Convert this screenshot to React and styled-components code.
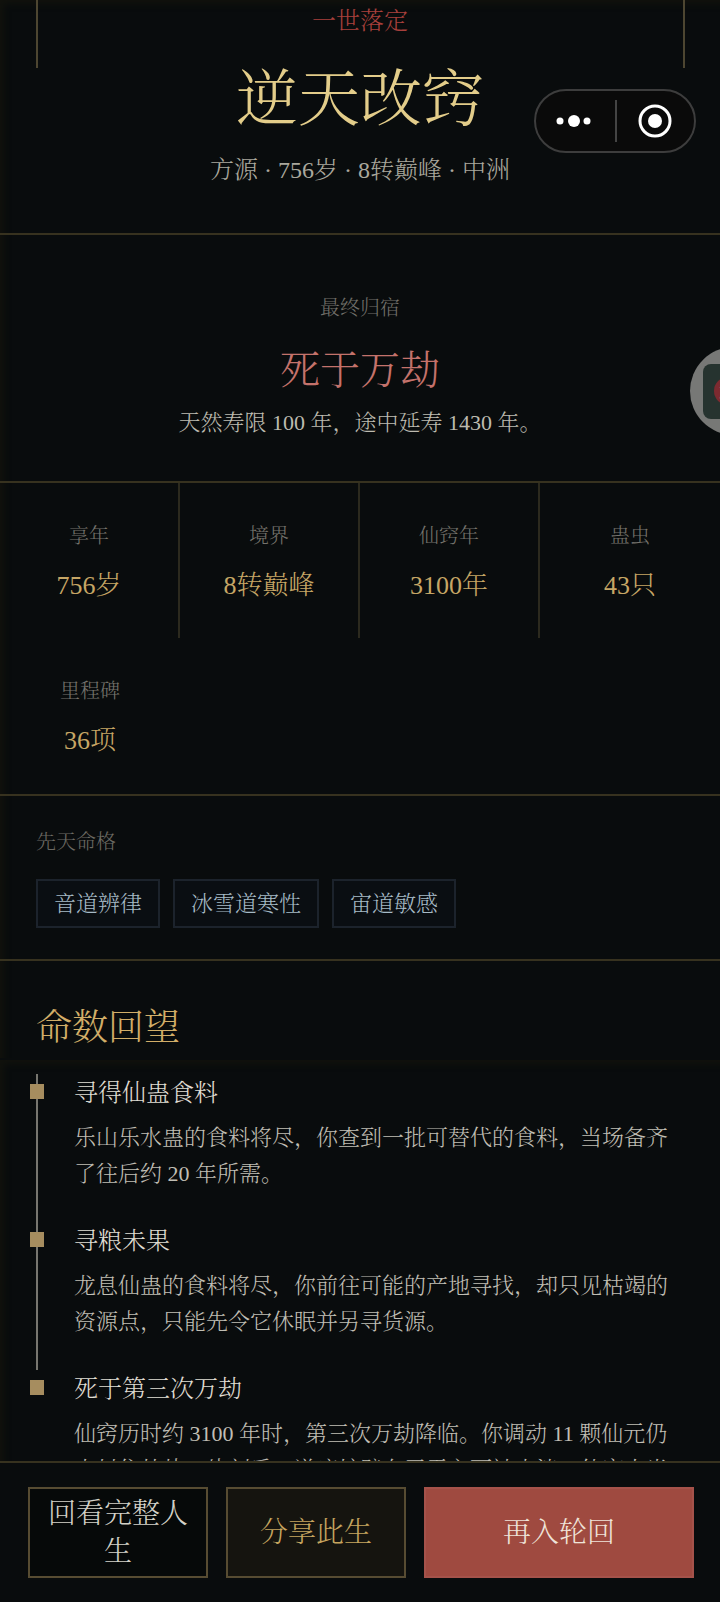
import React from 'react';
import styled, { createGlobalStyle } from 'styled-components';

const GlobalStyle = createGlobalStyle`
  html, body {
    margin: 0;
    padding: 0;
    background: #090c0d;
  }
  * { box-sizing: border-box; }
`;

const FONT = '"Liberation Serif", "Noto Serif CJK SC", "Source Han Serif SC", "Noto Sans CJK SC", serif';
const RULE = '#37321f';
const BG = '#090c0d';

const Page = styled.div`
  position: relative;
  width: 720px;
  height: 1602px;
  overflow: hidden;
  background: ${BG};
  font-family: ${FONT};
  font-weight: 300;
`;

const Panel = styled.div`
  box-shadow: inset 9px 9px 6px -5px #11120d;
`;

const Hero = styled.header`
  position: relative;
  padding-bottom: 46px;
  text-align: center;
  border-bottom: 2px solid ${RULE};
`;

const CornerLine = styled.span`
  position: absolute;
  top: 0;
  ${(p) => (p.$right ? 'right: 35px;' : 'left: 36px;')}
  width: 2px;
  height: 68px;
  background: #4d4631;
`;

const Kicker = styled.p`
  margin: 0;
  font-size: 24px;
  line-height: 42px;
  color: #a8403c;
`;

const Title = styled.h1`
  margin: 19px 0 0;
  font-size: 62px;
  line-height: 78px;
  font-weight: 300;
  color: #e3cd8a;
`;

const Meta = styled.p`
  margin: 14px 0 0;
  font-size: 24px;
  line-height: 34px;
  color: #aaa89d;
`;

const Fate = styled.section`
  padding: 58px 0 40px;
  text-align: center;
  border-bottom: 2px solid ${RULE};
`;

const FateLabel = styled.p`
  margin: 0;
  font-size: 20px;
  line-height: 30px;
  color: #72706a;
`;

const FateName = styled.h2`
  margin: 20px 0 0;
  font-size: 40px;
  line-height: 56px;
  font-weight: 300;
  color: #c4726b;
`;

const FateNote = styled.p`
  margin: 6px 0 0;
  font-size: 22px;
  line-height: 36px;
  color: #bdbbb0;
`;

const StatGrid = styled.section`
  display: grid;
  grid-template-columns: repeat(4, 180px);
  grid-auto-rows: 155px;
  height: 313px;
  border-bottom: 2px solid ${RULE};
`;

const Stat = styled.div`
  padding-top: 38px;
  text-align: center;
  border-right: ${(p) => (p.$divided ? `2px solid #2c2a1e` : 'none')};
`;

const StatLabel = styled.div`
  font-size: 20px;
  line-height: 30px;
  color: #75736c;
`;

const StatValue = styled.div`
  margin-top: 15px;
  font-size: 26px;
  line-height: 40px;
  color: #c6a665;
`;

const Talents = styled.section`
  padding: 31px 36px;
  border-bottom: 2px solid ${RULE};
`;

const TalentLabel = styled.div`
  font-size: 20px;
  line-height: 30px;
  color: #6c6a63;
`;

const TagRow = styled.div`
  display: flex;
  gap: 13px;
  margin-top: 22px;
`;

const Tag = styled.span`
  height: 49px;
  padding: 0 16px;
  font-size: 22px;
  line-height: 45px;
  color: #a6bac6;
  background: #0a0e12;
  border: 2px solid #1c232c;
`;

const Heading = styled.h2`
  margin: 0;
  padding: 42px 36px 5px;
  font-size: 36px;
  line-height: 50px;
  font-weight: 300;
  color: #d2ae68;
`;

const Timeline = styled(Panel)`
  padding: 14px 36px 0;
  margin-top: 2px;
`;

const Event = styled.article`
  position: relative;
  padding: 2px 0 30px 38px;

  &::before {
    content: '';
    display: ${(p) => (p.$last ? 'none' : 'block')};
    position: absolute;
    left: 0;
    top: 0;
    bottom: 0;
    width: 2px;
    background: #77766f;
  }

  &::after {
    content: '';
    position: absolute;
    left: -6px;
    top: 10px;
    width: 14px;
    height: 15px;
    background: #a68d5f;
  }
`;

const EventTitle = styled.h3`
  margin: 0;
  font-size: 24px;
  line-height: 34px;
  font-weight: 300;
  color: #e0ded4;
`;

const EventBody = styled.p`
  margin: 10px 0 0;
  font-size: 22px;
  line-height: 36px;
  color: #c0beb4;
`;

const ActionBar = styled.footer`
  position: absolute;
  left: 0;
  right: 0;
  bottom: 0;
  display: grid;
  grid-template-columns: 2fr 2fr 3fr;
  gap: 18px;
  height: 141px;
  padding: 24px 26px 24px 28px;
  background: ${BG};
  border-top: 2px solid ${RULE};
`;

const Action = styled.button`
  margin: 0;
  padding: 0 12px;
  font-family: ${FONT};
  font-weight: 300;
  font-size: 28px;
  line-height: 38px;
  color: ${(p) => p.$color};
  background: ${(p) => p.$bg};
  border: 2px solid ${(p) => p.$border};
  border-radius: 0;
`;

const Capsule = styled.div`
  position: absolute;
  top: 89px;
  left: 534px;
  display: flex;
  align-items: center;
  width: 162px;
  height: 64px;
  background: #0a0a0a;
  border: 2px solid #3d3d3d;
  border-radius: 32px;
`;

const CapsulePart = styled.div`
  display: flex;
  align-items: center;
  justify-content: center;
  width: ${(p) => (p.$divided ? '80px' : '79px')};
  height: 42px;
  border-left: ${(p) => (p.$divided ? '2px solid #444' : 'none')};
`;

const FloatBall = styled.div`
  position: absolute;
  top: 347px;
  left: 690px;
  width: 88px;
  height: 88px;
  background: #777876;
  border-radius: 50%;
`;

const FloatCard = styled.div`
  position: absolute;
  top: 17px;
  left: 13px;
  width: 54px;
  height: 55px;
  background: #26332f;
  border-radius: 8px;
`;

const FloatSeal = styled.span`
  position: absolute;
  top: 13px;
  left: 11px;
  width: 28px;
  height: 28px;
  font-size: 18px;
  line-height: 28px;
  text-align: center;
  color: #d9b9a8;
  background: #7d2a30;
  border-radius: 50%;
`;

const stats = [
  ['享年', '756岁'],
  ['境界', '8转巅峰'],
  ['仙窍年', '3100年'],
  ['蛊虫', '43只'],
  ['里程碑', '36项'],
];

const talents = ['音道辨律', '冰雪道寒性', '宙道敏感'];

const events = [
  {
    title: '寻得仙蛊食料',
    body: '乐山乐水蛊的食料将尽，你查到一批可替代的食料，当场备齐了往后约 20 年所需。',
  },
  {
    title: '寻粮未果',
    body: '龙息仙蛊的食料将尽，你前往可能的产地寻找，却只见枯竭的资源点，只能先令它休眠并另寻货源。',
  },
  {
    title: '死于第三次万劫',
    body: '仙窍历时约 3100 年时，第三次万劫降临。你调动 11 颗仙元仍未封住劫势。片刻后，道痕护壁在天雷之下被击溃，仙窍大半尽毁。',
  },
];

const App = () => (
  <Page>
    <GlobalStyle />
    <Panel>
      <Hero>
        <CornerLine />
        <CornerLine $right />
        <Kicker>一世落定</Kicker>
        <Title>逆天改窍</Title>
        <Meta>方源 · 756岁 · 8转巅峰 · 中洲</Meta>
      </Hero>
      <Fate>
        <FateLabel>最终归宿</FateLabel>
        <FateName>死于万劫</FateName>
        <FateNote>天然寿限 100 年，途中延寿 1430 年。</FateNote>
      </Fate>
      <StatGrid>
        {stats.map(([label, value], i) => (
          <Stat key={label} $divided={i < 3}>
            <StatLabel>{label}</StatLabel>
            <StatValue>{value}</StatValue>
          </Stat>
        ))}
      </StatGrid>
      <Talents>
        <TalentLabel>先天命格</TalentLabel>
        <TagRow>
          {talents.map((t) => <Tag key={t}>{t}</Tag>)}
        </TagRow>
      </Talents>
      <Heading>命数回望</Heading>
    </Panel>
    <Timeline>
      {events.map((e, i) => (
        <Event key={e.title} $last={i === events.length - 1}>
          <EventTitle>{e.title}</EventTitle>
          <EventBody>{e.body}</EventBody>
        </Event>
      ))}
    </Timeline>
    <ActionBar>
      <Action $color="#d4d2c8" $bg="#060909" $border="#574c32">回看完整人生</Action>
      <Action $color="#c6a55f" $bg="#15140f" $border="#574c32">分享此生</Action>
      <Action $color="#efe4da" $bg="#9f4a40" $border="#a5524a">再入轮回</Action>
    </ActionBar>
    <Capsule>
      <CapsulePart>
        <svg width="44" height="14" viewBox="0 0 44 14" fill="#fff">
          <circle cx="7" cy="7" r="3.5" />
          <circle cx="21" cy="7" r="6" />
          <circle cx="34" cy="7" r="3.5" />
        </svg>
      </CapsulePart>
      <CapsulePart $divided>
        <svg width="36" height="36" viewBox="0 0 36 36">
          <circle cx="18" cy="18" r="15" fill="none" stroke="#fff" strokeWidth="3" />
          <circle cx="18" cy="18" r="7" fill="#fff" />
        </svg>
      </CapsulePart>
    </Capsule>
    <FloatBall>
      <FloatCard>
        <FloatSeal>起</FloatSeal>
      </FloatCard>
    </FloatBall>
  </Page>
);

export default App;
